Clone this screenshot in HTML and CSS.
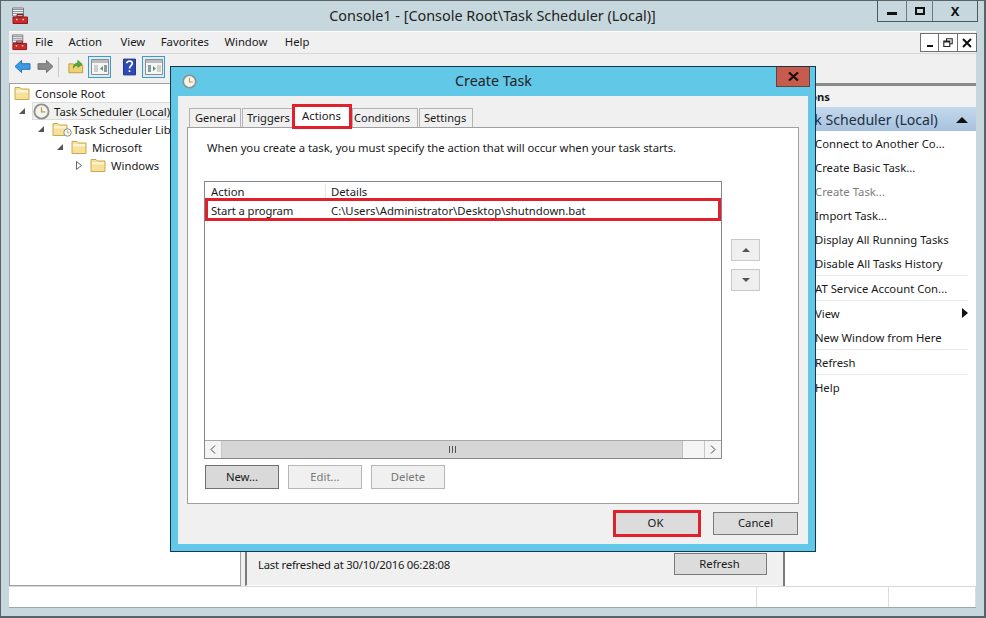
FILE: index.html
```html
<!DOCTYPE html>
<html lang="en">
<head>
<meta charset="utf-8">
<title>Console1</title>
<link rel="stylesheet" href="styles.css">
</head>
<body>
<svg class="defs" width="0" height="0" aria-hidden="true">
  <symbol id="folder" viewBox="0 0 16 16">
    <path d="M1 2.500h5l1.500 1.500H15v10.500H1z" fill="#f6e09a" stroke="#c9a94f"/>
    <path d="M2 5h12v2.500H2z" fill="#fdf3cf"/>
  </symbol>
  <symbol id="clock" viewBox="0 0 18 18">
    <circle cx="9" cy="9" r="7.500" fill="#f2f4f2" stroke="#8f908a" stroke-width="2"/>
    <path d="M9 4.500V9.500H13" fill="none" stroke="#c19a3a" stroke-width="1.300"/>
  </symbol>
  <symbol id="toolbox" viewBox="0 0 18 18">
    <path d="M1.500 1h11v8h-11z" fill="#f4f4f4" stroke="#77777f"/>
    <path d="M2 2.500h10M2 4.500h10M2 6.500h10" stroke="#8b8f9c"/>
    <path d="M2 10h14.500v6.500H2z" fill="#cc2b2b" stroke="#8e1a1a"/>
    <path d="M6 7.500h6v2.500H6z" fill="none" stroke="#8e1a1a"/>
    <path d="M5 12.500h1.500M11.500 12.500h1.500" stroke="#f6d5b0" stroke-width="1.500"/>
  </symbol>
  <symbol id="pane" viewBox="0 0 18 16">
    <path d="M.5.500h17v15H.5z" fill="#f5f5f5" stroke="#8c8c8c"/>
    <path d="M1 1h16v3H1z" fill="#bcbcbc"/>
  </symbol>
</svg>

<div class="window">
  <header class="titlebar">
    <svg class="app-icon"><use href="#toolbox"/></svg>
    <div class="title">Console1 - [Console Root\Task Scheduler (Local)]</div>
    <div class="win-controls">
      <div class="wc wc-min"><span class="glyph-min"></span></div>
      <div class="wc wc-max"><span class="glyph-max"></span></div>
      <div class="wc wc-close">X</div>
    </div>
  </header>

  <div class="client">
    <nav class="menubar">
      <svg class="menu-icon"><use href="#toolbox"/></svg>
      <span class="menu-item">File</span>
      <span class="menu-item menu-action">Action</span>
      <span class="menu-item">View</span>
      <span class="menu-item">Favorites</span>
      <span class="menu-item menu-window">Window</span>
      <span class="menu-item">Help</span>
      <div class="mdi-controls">
        <div class="mc"><span class="mc-min"></span></div>
        <div class="mc">
          <svg width="10" height="10" viewBox="0 0 10 10"><path d="M3.500 2.500V.8h5.700v5h-2M.8 3h6v5.500H.8zM.8 4h6" fill="none" stroke="#222" stroke-width="1.100"/></svg>
        </div>
        <div class="mc mc-x">
          <svg width="10" height="10" viewBox="0 0 10 10"><path d="M1 1l8 8M9 1L1 9" stroke="#111" stroke-width="2"/></svg>
        </div>
      </div>
    </nav>

    <div class="toolbar">
      <svg class="tb-arrow" viewBox="0 0 18 16"><path d="M1 8l7-6.500V5h9v6H8v3.500z" fill="#3c9be0" stroke="#1f6fb3"/></svg>
      <svg class="tb-arrow" viewBox="0 0 18 16"><path d="M17 8l-7-6.500V5H1v6h9v3.500z" fill="#8c8c8c" stroke="#6c6c6c"/></svg>
      <span class="tb-sep"></span>
      <svg class="tb-up" viewBox="0 0 18 18"><path d="M1 6h5l1 1.500h9.500V16H1z" fill="#f0d272" stroke="#b99a3e"/><path d="M6 11c0-4 2-6 5-6V2l5 4.500-5 3.500V7.500c-2 0-4 1-5 3.500z" fill="#4fae3b" stroke="#2f8124" stroke-width=".6"/></svg>
      <div class="tb-toggle">
        <svg width="18" height="16"><use href="#pane"/><path d="M3 6h4v7H3z" fill="#cfcfcf"/><path d="M12 7l-3 2.500 3 2.500z" fill="#5b9a6a"/><path d="M13 6h3v7h-3z" fill="#8d9aa0"/></svg>
      </div>
      <svg class="tb-help" viewBox="0 0 14 18"><path d="M.5.500h13v17H.5z" fill="#2c49b5" stroke="#1b2f85"/><path d="M4 5c0-3 6-3 6 0 0 2.500-3 2.500-3 5.500M7 12.500v2" fill="none" stroke="#fff" stroke-width="1.800"/></svg>
      <div class="tb-toggle">
        <svg width="18" height="16"><use href="#pane"/><path d="M3 6h3v7H3z" fill="#8d9aa0"/><path d="M8 7l3 2.500-3 2.500z" fill="#5b9a6a"/><path d="M12 6h4v7h-4z" fill="#cfcfcf"/></svg>
      </div>
    </div>

    <main class="panes">
      <section class="tree">
        <div class="tree-row lvl0"><svg class="ico"><use href="#folder"/></svg>Console Root</div>
        <div class="tree-row lvl1"><span class="exp"></span><span class="sel"><svg class="ico"><use href="#clock"/></svg>Task Scheduler (Local)</span></div>
        <div class="tree-row lvl2"><span class="exp"></span><svg class="ico"><use href="#folder"/></svg><svg class="mini-clock"><use href="#clock"/></svg>Task Scheduler Library</div>
        <div class="tree-row lvl3"><span class="exp"></span><svg class="ico"><use href="#folder"/></svg>Microsoft</div>
        <div class="tree-row lvl4"><svg class="exp-closed" width="6" height="9" viewBox="0 0 6 9"><path d="M.5.500l5 4-5 4z" fill="#fff" stroke="#666"/></svg><svg class="ico"><use href="#folder"/></svg>Windows</div>
      </section>

      <section class="center">
        <div class="center-foot">
          <span class="refreshed">Last refreshed at 30/10/2016 06:28:08</span>
          <button class="btn refresh">Refresh</button>
        </div>
      </section>

      <aside class="actions">
        <div class="actions-head">Actions</div>
        <div class="actions-band"><span>Task Scheduler (Local)</span><i class="tri-up"></i></div>
        <ul class="action-list">
          <li>Connect to Another Co...</li>
          <li>Create Basic Task...</li>
          <li class="muted">Create Task...</li>
          <li>Import Task...</li>
          <li>Display All Running Tasks</li>
          <li class="rule">Disable All Tasks History</li>
          <li class="rule">AT Service Account Con...</li>
          <li class="has-sub">View<i class="tri-right"></i></li>
          <li class="rule">New Window from Here</li>
          <li class="rule">Refresh</li>
          <li>Help</li>
        </ul>
      </aside>
    </main>

    <footer class="statusbar">
      <span class="st st-a"></span><span class="st st-b"></span><span class="st st-c"></span>
    </footer>
  </div>
</div>

<div class="dialog">
  <div class="dlg-title">
    <svg class="dlg-clock"><use href="#clock"/></svg>
    <span class="dlg-caption">Create Task</span>
    <div class="dlg-close">
      <svg width="11" height="9" viewBox="0 0 11 9"><path d="M1 .5l9 8M10 .5l-9 8" stroke="#1c1010" stroke-width="2.200"/></svg>
    </div>
  </div>
  <div class="dlg-body">
    <div class="tabs">
      <span class="tab">General</span>
      <span class="tab">Triggers</span>
      <span class="tab tab-on">Actions</span>
      <span class="tab">Conditions</span>
      <span class="tab">Settings</span>
    </div>
    <div class="tab-pane">
      <p class="intro">When you create a task, you must specify the action that will occur when your task starts.</p>
      <div class="list-area">
        <div class="list">
          <div class="list-head"><span class="col-a">Action</span><span class="col-b">Details</span></div>
          <div class="list-row"><span class="col-a">Start a program</span><span class="col-b">C:\Users\Administrator\Desktop\shutndown.bat</span></div>
          <div class="list-fill"></div>
          <div class="hscroll">
            <span class="sb-btn">
              <svg width="6" height="9" viewBox="0 0 6 9"><path d="M5 .5L1 4.500l4 4" fill="none" stroke="#444"/></svg>
            </span>
            <span class="sb-thumb"><i></i><i></i><i></i></span>
            <span class="sb-track"></span>
            <span class="sb-btn sb-right">
              <svg width="6" height="9" viewBox="0 0 6 9"><path d="M1 .5l4 4-4 4" fill="none" stroke="#444"/></svg>
            </span>
          </div>
        </div>
        <div class="updown">
          <span class="ud"><i class="ud-up"></i></span>
          <span class="ud"><i class="ud-down"></i></span>
        </div>
      </div>
      <div class="list-btns">
        <button class="btn btn-new">New...</button>
        <button class="btn btn-off">Edit...</button>
        <button class="btn btn-off">Delete</button>
      </div>
    </div>
    <div class="dlg-foot">
      <button class="btn ok">OK</button>
      <button class="btn cancel">Cancel</button>
    </div>
  </div>
</div>
</body>
</html>
```
FILE: styles.css
```css
* { box-sizing: border-box; }
html, body { margin: 0; height: 100%; }
body {
  width: 986px; height: 618px; overflow: hidden; position: relative;
  font-family: "Noto Sans", "Open Sans", sans-serif; font-size: 11.300px; color: #1a1a1a;
}
.defs { position: absolute; }
svg { display: block; flex: none; }
i { display: block; }

.window {
  width: 986px; height: 618px; background: #c6d8dd;
  border: 1px solid #5a6468; border-width: 1px 2px 2px 1px;
  display: flex; flex-direction: column;
}
.titlebar { height: 30px; flex: none; position: relative; display: flex; align-items: center; justify-content: center; }
.app-icon { position: absolute; left: 10px; top: 6px; width: 18px; height: 18px; }
.title { font-size: 14.400px; color: #222; margin-top: -2px; }
.win-controls {
  position: absolute; right: 6px; top: -1px; height: 22px; display: flex;
  border: 1px solid #4c5a60; border-top: 0;
}
.wc { display: flex; align-items: center; justify-content: center; border-left: 1px solid #6d7a7f; height: 100%; }
.wc:first-child { border-left: 0; }
.wc-min { width: 28px; }
.wc-max { width: 26px; }
.wc-close { width: 45px; font-weight: 700; font-size: 13px; color: #111; }
.glyph-min { width: 10px; height: 3px; background: #111; margin-top: 6px; }
.glyph-max { width: 10px; height: 8px; border: 2px solid #111; }

.client {
  flex: 1; margin: 0 8px 8px; background: #f0f0f0;
  display: flex; flex-direction: column; min-height: 0;
}
.menubar { height: 23px; flex: none; display: flex; align-items: center; padding: 0 0 2px 2px; position: relative; border-top: 1px solid #fff; border-bottom: 1px solid #d7d7d7; }
.menu-icon { width: 17px; height: 17px; margin: 2px 7px 0 0; }
.menu-item { margin-right: 15.500px; }
.menu-action { margin-right: 18.500px; }
.menu-window { margin-right: 17.500px; }
.mdi-controls { position: absolute; right: -1px; top: 1px; height: 19px; display: flex; border: 1px solid #707070; background: #fff; }
.mc { width: 19px; display: flex; align-items: center; justify-content: center; border-left: 1px solid #707070; }
.mc:first-child { border-left: 0; width: 17px; }
.mc-min { width: 6px; height: 2px; background: #111; margin-top: 7px; }

.toolbar { height: 29px; flex: none; display: flex; align-items: center; padding: 0 0 4px 5px; }
.tb-arrow { width: 17px; height: 15px; margin-right: 6px; }
.tb-sep { width: 1px; height: 20px; background: #c8c8c8; margin: 0 9px 0 -2px; }
.tb-up { width: 16px; height: 17px; margin-right: 4px; }
.tb-toggle { width: 23px; height: 22px; border: 1px solid #3d9bc4; background: #dcecf5; display: flex; align-items: center; justify-content: center; }
.tb-toggle svg { width: 18px; height: 16px; }
.tb-help { width: 13px; height: 18px; margin: 0 6px 0 12px; }

.panes { flex: 1; display: flex; min-height: 0; }
.tree {
  width: 232px; flex: none; background: #fff;
  border: 1px solid #a0a0a0; margin-right: 4px;
}
.tree-row { height: 18px; display: flex; align-items: center; white-space: nowrap; }
.ico { width: 16px; height: 16px; margin-right: 5px; }
.lvl0 { padding-left: 4px; }
.lvl1 { padding-left: 9px; }
.lvl2 { padding-left: 28px; }
.lvl3 { padding-left: 47px; }
.lvl4 { padding-left: 66px; }
.lvl2 .ico { margin-right: 0; }
.mini-clock { width: 9px; height: 9px; margin: 8px 1px 0 -5px; align-self: flex-start; }
.exp { width: 0; height: 0; border-left: 6px solid transparent; border-bottom: 6px solid #555; margin-right: 8px; }
.lvl1 .exp { margin-right: 7px; }
.exp-closed { margin-right: 8px; }
.sel { display: flex; align-items: center; height: 18px; background: #f1f1f1; border: 1px solid #dcdcdc; width: 140px; }
.sel .ico { width: 17px; height: 17px; margin-right: 4px; }

.center { flex: none; width: 534px; display: flex; flex-direction: column; justify-content: flex-end; border-left: 2px solid #7a7a7a; margin-right: 4px; background: #f0f0f0; border-bottom: 1px solid #fff; }
.center-foot { height: 33px; display: flex; align-items: center; justify-content: space-between; padding: 0 12px 9px 11px; }
.refreshed { letter-spacing: -.22px; }

.actions { flex: 1; background: #fff; border-left: 2px solid #7a7a7a; min-width: 0; position: relative; }
.actions-head { height: 24px; border-top: 3px solid #8a8a8a; background: #f2f2f2; font-weight: 700; padding: 0 0 1px 3px; display: flex; align-items: center; }
.actions-band { height: 24px; background: linear-gradient(#c6d8ec, #a6c2de); display: flex; align-items: center; justify-content: space-between; padding: 1px 8px 0 8px; font-size: 14.100px; color: #20303f; white-space: nowrap; }
.tri-up { width: 0; height: 0; border: 6px solid transparent; border-top: 0; border-bottom: 6px solid #111; }
.action-list { list-style: none; margin: 0; padding: 0 8px 0 30px; }
.action-list li { height: 24px; display: flex; align-items: center; white-space: nowrap; justify-content: space-between; }
.action-list .rule { border-bottom: 1px solid #eaeaea; height: 25px; }
.action-list .muted { color: #7d7d7d; }
.tri-right { width: 0; height: 0; border: 5px solid transparent; border-right: 0; border-left: 6px solid #111; }

.statusbar { height: 22px; flex: none; display: flex; background: #fff; border-top: 1px solid #d8d8d8; border-bottom: 1px solid #9aa; }
.st { display: block; border-right: 1px solid #dcdcdc; }
.st-a { width: 748px; }
.st-b { width: 132px; }
.st-c { flex: 1; }

.dialog {
  position: absolute; left: 170px; top: 66px; width: 646px; height: 486px;
  background: #62c8e8; border: 1px solid #14384a; display: flex; flex-direction: column;
  padding: 0 7px 7px;
}
.dlg-title { height: 29px; flex: none; position: relative; display: flex; align-items: center; justify-content: center; }
.dlg-clock { position: absolute; left: 4px; top: 7px; width: 15px; height: 15px; }
.dlg-caption { font-size: 14.300px; color: #222; margin: -2px 0 0 1px; }
.dlg-close {
  position: absolute; right: -2px; top: 0; width: 34px; height: 20px; background: #c75b4e;
  border: 1px solid #5e4743; border-top: 0; display: flex; align-items: center; justify-content: center;
}
.dlg-body { flex: 1; background: #f0f0f0; padding: 8px 9px 0; display: flex; flex-direction: column; min-height: 0; }
.tabs { height: 23px; flex: none; display: flex; align-items: flex-end; padding-left: 2px; position: relative; z-index: 1; }
.tab {
  height: 19px; padding: 0 0 2px 6px; border: 1px solid #b4b4b4; border-bottom: 0; margin-right: 1px;
  background: #f0f0f0; display: flex; align-items: center; font-size: 11.100px;
}
.tab:nth-child(1) { width: 52px; padding-left: 5px; }
.tab:nth-child(2) { width: 51px; margin-right: -1px; padding-left: 4px; }
.tab:nth-child(4) { width: 66px; padding-left: 1px; }
.tab:nth-child(5) { width: 54px; padding-left: 4px; }
.tab.tab-on { height: 25px; width: 60px; background: #fff; border: 3px solid #e0212c; padding: 0 0 2px 7px; z-index: 2; margin: 0 0 -2px 0; font-size: 11.300px; }
.tab-pane { height: 377px; flex: none; background: #fff; border: 1px solid #a0a0a0; padding: 0 38px 0 16px; }
.intro { margin: 0; padding: 12px 0 0 3px; height: 53px; letter-spacing: -.03px; }
.list-area { display: flex; height: 278px; }
.list { width: 518px; flex: none; height: 278px; border: 1px solid #828790; display: flex; flex-direction: column; }
.list-head { height: 16px; flex: none; display: flex; align-items: center; background: #fff; padding-top: 2px; }
.list-head .col-a { width: 121px; padding-left: 6px; border-right: 1px solid #e5e5e5; height: 100%; display: flex; align-items: center; }
.col-a { width: 120px; padding-left: 5px; flex: none; }
.col-b { padding-left: 5px; white-space: nowrap; }
.list-row { height: 23px; flex: none; display: flex; align-items: center; border: 3px solid #e0212c; padding-top: 1px; }
.list-row .col-a { padding-left: 3px; letter-spacing: -.12px; }
.list-row .col-b { padding-left: 3px; }
.list-fill { flex: 1; }
.hscroll { height: 18px; flex: none; display: flex; border-top: 1px solid #a8a8a8; background: #f0f0f0; }
.sb-btn { width: 17px; display: flex; align-items: center; justify-content: center; background: #f4f4f4; border-right: 1px solid #c8c8c8; }
.sb-right { border-right: 0; border-left: 1px solid #c8c8c8; }
.sb-thumb { width: 461px; background: #d6d6d6; border-right: 1px solid #c0c0c0; display: flex; align-items: center; justify-content: center; gap: 1px; }
.sb-thumb i { width: 1px; height: 7px; background: #555; margin: 0 .5px; }
.sb-track { flex: 1; background: #f5f5f5; }
.updown { margin-left: 9px; padding-top: 58px; display: flex; flex-direction: column; gap: 8px; }
.ud { width: 29px; height: 22px; background: #efefef; border: 1px solid #c9c9c9; display: flex; align-items: center; justify-content: center; }
.ud-up { width: 0; height: 0; border: 4px solid transparent; border-top: 0; border-bottom: 4px solid #555; }
.ud-down { width: 0; height: 0; border: 4px solid transparent; border-bottom: 0; border-top: 4px solid #555; }
.list-btns { display: flex; gap: 9px; padding: 6px 0 0 1px; }

.btn { font: inherit; color: #1a1a1a; background: #dcdcdc; border: 1px solid #7a7a7a; padding: 0 0 2px; display: flex; align-items: center; justify-content: center; }
.list-btns .btn { width: 74px; height: 24px; }
.btn-new { background: #d9d9d9; border-color: #707070; }
.btn-off { background: #f0f0f0; border-color: #b5b5b5; color: #777; }
.refresh { width: 93px; height: 22px; padding-right: 2px; }

.dlg-foot { flex: 1; display: flex; justify-content: flex-end; align-items: center; padding: 0 1px 1px 0; gap: 12px; }
.ok { width: 88px; height: 27px; border: 3px solid #e0212c; background: #dcdcdc; padding-right: 3px; }
.cancel { width: 85px; height: 23px; }
```
